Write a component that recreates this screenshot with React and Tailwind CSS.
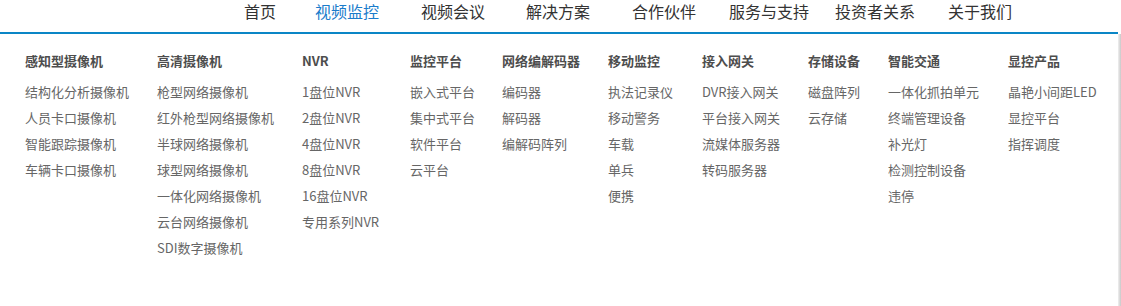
import React from "react";

const navItems = [
  { t: "首页", ml: "ml-[244px]" },
  { t: "视频监控", ml: "ml-[39px]", active: true },
  { t: "视频会议", ml: "ml-[42px]" },
  { t: "解决方案", ml: "ml-[41px]" },
  { t: "合作伙伴", ml: "ml-[42px]" },
  { t: "服务与支持", ml: "ml-[33px]" },
  { t: "投资者关系", ml: "ml-[26px]" },
  { t: "关于我们", ml: "ml-[33px]" },
];

const columns = [
  { w: "w-[132px]", h: "感知型摄像机", items: ["结构化分析摄像机", "人员卡口摄像机", "智能跟踪摄像机", "车辆卡口摄像机"] },
  { w: "w-[145px]", h: "高清摄像机", items: ["枪型网络摄像机", "红外枪型网络摄像机", "半球网络摄像机", "球型网络摄像机", "一体化网络摄像机", "云台网络摄像机", "SDI数字摄像机"] },
  { w: "w-[108px]", h: "NVR", items: ["1盘位NVR", "2盘位NVR", "4盘位NVR", "8盘位NVR", "16盘位NVR", "专用系列NVR"] },
  { w: "w-[92px]", h: "监控平台", items: ["嵌入式平台", "集中式平台", "软件平台", "云平台"] },
  { w: "w-[106px]", h: "网络编解码器", items: ["编码器", "解码器", "编解码阵列"] },
  { w: "w-[94px]", h: "移动监控", items: ["执法记录仪", "移动警务", "车载", "单兵", "便携"] },
  { w: "w-[106px]", h: "接入网关", items: ["DVR接入网关", "平台接入网关", "流媒体服务器", "转码服务器"] },
  { w: "w-[80px]", h: "存储设备", items: ["磁盘阵列", "云存储"] },
  { w: "w-[120px]", h: "智能交通", items: ["一体化抓拍单元", "终端管理设备", "补光灯", "检测控制设备", "违停"] },
  { w: "w-[110px]", h: "显控产品", items: ["晶艳小间距LED", "显控平台", "指挥调度"] },
];

export default function App() {
  return (
    <div
      className="w-[1121px] h-[306px] bg-white overflow-hidden flex flex-col"
      style={{ fontFamily: '"Microsoft YaHei", "Noto Sans CJK SC", "Noto Sans", sans-serif' }}
    >
      <div className="flex h-8 w-[1118px] shrink-0">
        {navItems.map((n) => (
          <div
            key={n.t}
            className={`${n.ml} text-[16px] leading-[22px] whitespace-nowrap ${n.active ? "text-[#1a7ccb]" : "text-[#333333]"}`}
          >
            {n.t}
          </div>
        ))}
      </div>
      <div className="h-[2px] w-[1118px] bg-[#0a86c6] shrink-0" />
      <div className="flex flex-1">
        <div className="flex w-[1118px] pl-[25px] pt-[14px]">
          {columns.map((c) => (
            <div key={c.h} className={`${c.w} shrink-0`}>
              <div className="text-[13px] leading-[26px] font-bold text-[#4d4d4d] mb-[5px] whitespace-nowrap">{c.h}</div>
              {c.items.map((i) => (
                <div key={i} className="text-[13px] leading-[26px] text-[#666666] whitespace-nowrap">
                  {i}
                </div>
              ))}
            </div>
          ))}
        </div>
        <div className="w-[3px] bg-gradient-to-r from-[#f0f0f0] to-[#c8c8c8]" />
      </div>
    </div>
  );
}
